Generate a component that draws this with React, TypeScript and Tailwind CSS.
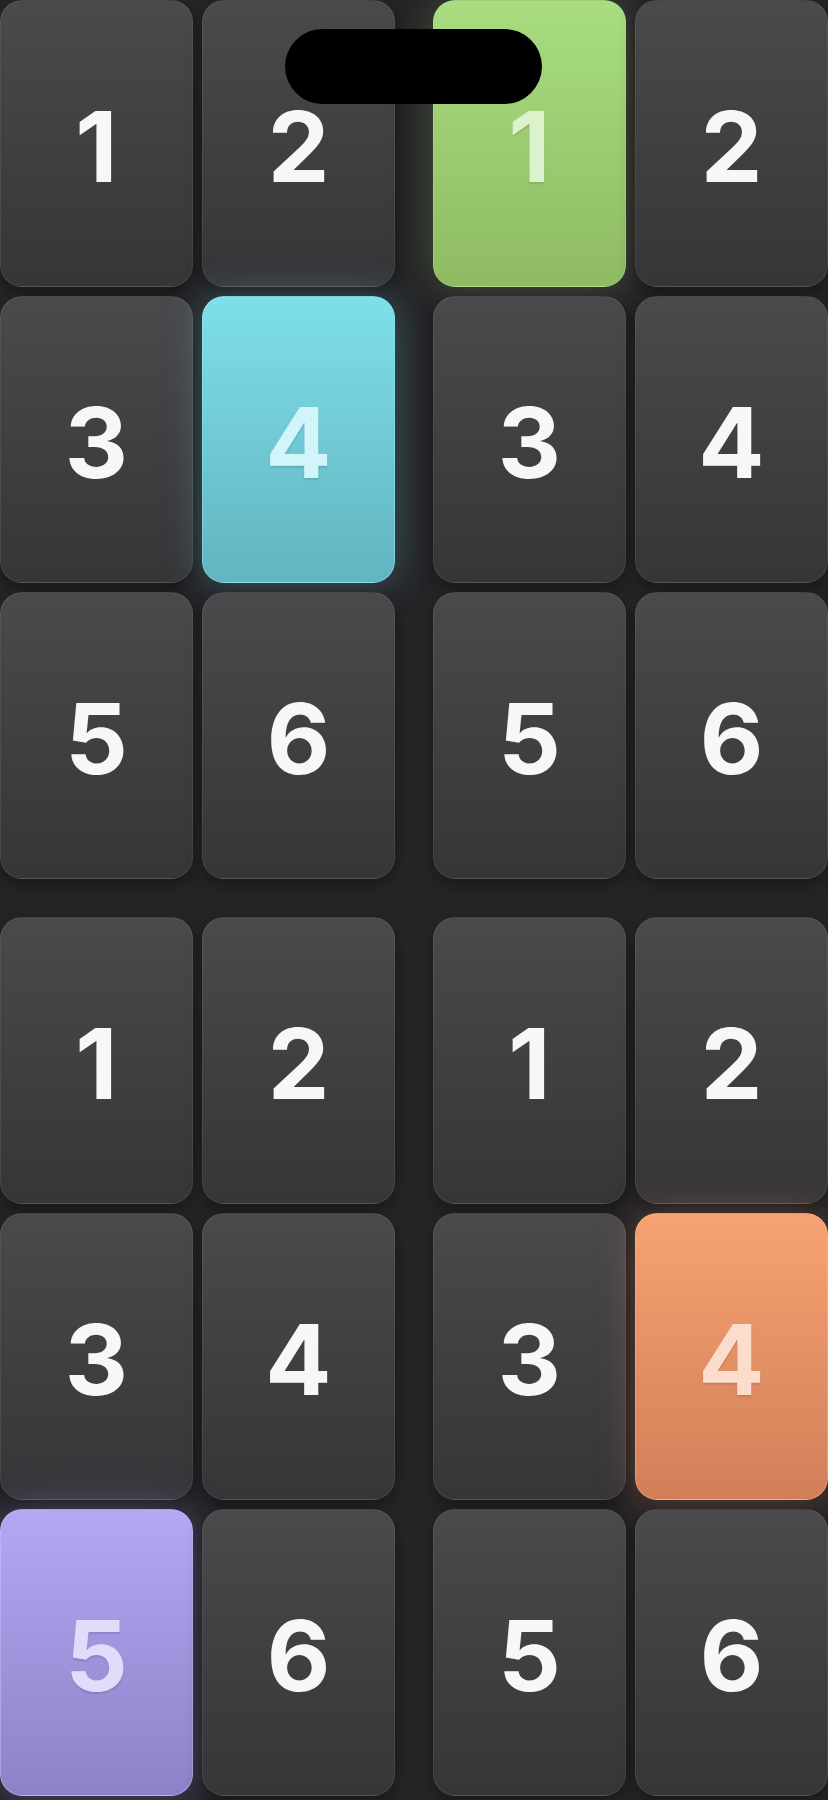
import React from 'react';

type Accent = 'green' | 'cyan' | 'orange' | 'purple' | null;

type Block = {
  labels: string[];
  accent: { index: number; tone: Accent };
};

const blocks: Block[] = [
  { labels: ['1', '2', '3', '4', '5', '6'], accent: { index: 3, tone: 'cyan' } },
  { labels: ['1', '2', '3', '4', '5', '6'], accent: { index: 0, tone: 'green' } },
  { labels: ['1', '2', '3', '4', '5', '6'], accent: { index: 4, tone: 'purple' } },
  { labels: ['1', '2', '3', '4', '5', '6'], accent: { index: 3, tone: 'orange' } },
];

const toneCard: Record<Exclude<Accent, null>, string> = {
  green:
    'bg-gradient-to-b from-[#a9dd80] to-[#8fbb63] border-[#b9e69a]/40 shadow-[0_0_40px_rgba(150,205,110,0.28)]',
  cyan: 'bg-gradient-to-b from-[#7ee0ea] to-[#62b4c0] border-[#9eeaf2]/50 shadow-[0_0_40px_rgba(110,215,228,0.3)]',
  orange:
    'bg-gradient-to-b from-[#f7a272] to-[#d27f59] border-[#ffc09a]/40 shadow-[0_0_40px_rgba(240,150,100,0.28)]',
  purple:
    'bg-gradient-to-b from-[#b4a8f4] to-[#8d81c8] border-[#c8bff8]/50 shadow-[0_0_40px_rgba(170,155,240,0.3)]',
};

const toneText: Record<Exclude<Accent, null>, string> = {
  green: 'text-[#dcf2cc]',
  cyan: 'text-[#d2f5f9]',
  orange: 'text-[#fcdccb]',
  purple: 'text-[#e2dcfb]',
};

function Card({ label, tone }: { label: string; tone: Accent }) {
  const base =
    'flex h-[287px] items-center justify-center rounded-[22px] border';
  const skin = tone
    ? toneCard[tone]
    : 'bg-gradient-to-b from-[#4a494c] to-[#363538] border-white/[0.07] shadow-[0_6px_16px_rgba(0,0,0,0.35)]';
  const text = tone ? `${toneText[tone]} [text-shadow:0_2px_2px_rgba(0,0,0,0.12)]` : 'text-[#f7f7f5]';

  return (
    <div className={`${base} ${skin}`}>
      <span
        className={`pt-[6px] text-[98px] font-bold leading-none ${text}`}
        style={{ fontFamily: 'Inter, "Liberation Sans", sans-serif' }}
      >
        {label}
      </span>
    </div>
  );
}

export default function App() {
  return (
    <div className="relative min-h-[1800px] w-full overflow-hidden bg-[#252427]">
      <div className="grid grid-cols-2 gap-[38px]">
        {blocks.map((block, b) => (
          <div key={b} className="grid grid-cols-2 gap-[9px]">
            {block.labels.map((label, i) => (
              <Card
                key={i}
                label={label}
                tone={i === block.accent.index ? block.accent.tone : null}
              />
            ))}
          </div>
        ))}
      </div>

      <div className="absolute left-[285px] top-[29px] h-[75px] w-[257px] rounded-full bg-black" />
    </div>
  );
}
